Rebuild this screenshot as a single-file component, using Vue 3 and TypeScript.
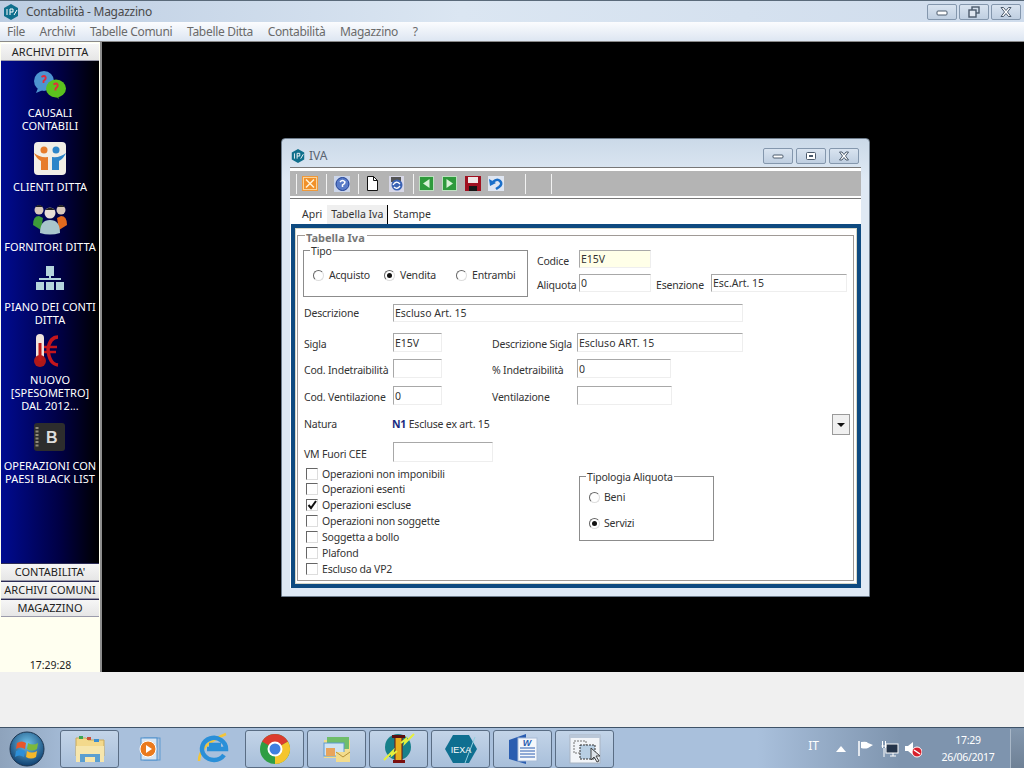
<template>
  <div class="screen">
    <header class="titlebar">
      <svg class="app-logo" width="18" height="18" viewBox="0 0 18 18">
        <path d="M9 1l7 4v8l-7 4-7-4V5z" fill="#0f6f8c" />
        <path d="M5 6v6M8 6v6M8 6h3v3H8M12 12l3-5" stroke="#fff" stroke-width="1" fill="none" />
      </svg>
      <span class="title-text">Contabilità - Magazzino</span>
      <div class="win-btns">
        <div class="win-btn">
          <svg width="14" height="10" viewBox="0 0 14 10"><rect x="2" y="4" width="10" height="4" rx="1" fill="#fff" stroke="#4b5a6c" /></svg>
        </div>
        <div class="win-btn">
          <svg width="14" height="12" viewBox="0 0 14 12"><rect x="5" y="1" width="7" height="6" fill="none" stroke="#4b5a6c" stroke-width="1.4" /><rect x="2" y="4" width="7" height="7" fill="#dfe7f1" stroke="#4b5a6c" stroke-width="1.4" /></svg>
        </div>
        <div class="win-btn">
          <svg width="16" height="12" viewBox="0 0 16 12"><path d="M3 1.500h2.500L8 4.500l2.500-3H13L9.500 6l3.500 4.500h-2.500L8 7.500l-2.500 3H3L6.500 6z" fill="#fff" stroke="#4b5a6c" /></svg>
        </div>
      </div>
    </header>

    <nav class="menubar">
      <span v-for="m in menus" :key="m">{{ m }}</span>
    </nav>

    <main class="workspace">
      <aside class="sidebar">
        <div class="side-btn first">ARCHIVI DITTA</div>
        <div class="side-items">
          <div v-for="item in sideItems" :key="item.id" class="side-item" :class="item.id">
            <svg class="side-icon" width="44" height="44" viewBox="0 0 44 44">
              <g v-if="item.id === 'causali'">
                <circle cx="16" cy="19" r="10" fill="#4d94d0" />
                <path d="M10 26l-2 5 7-3z" fill="#4d94d0" />
                <path d="M28 35l3 2-1-4z" fill="#4a9a18" />
                <ellipse cx="28" cy="26.500" rx="10" ry="9" fill="#5bc21e" />
                <path d="M13.500 15q3-2 4 0t-2 4v2M25.500 22.500q3-2 4 0t-2 4v2" stroke="#e22c3c" stroke-width="1.800" fill="none" />
              </g>
              <g v-else-if="item.id === 'clienti'">
                <rect x="6" y="6" width="32" height="33" rx="4" fill="#f2eee6" />
                <circle cx="16" cy="14" r="3.500" fill="#e77c2b" />
                <circle cx="28" cy="14" r="3.500" fill="#2e85c9" />
                <path d="M6 17q6 5 14 4v13h-7v-9q-5-3-7-8z" fill="#e77c2b" />
                <path d="M38 17q-6 5-14 4v13h7v-9q5-3 7-8z" fill="#2e85c9" />
              </g>
              <g v-else-if="item.id === 'fornitori'">
                <circle cx="11" cy="14" r="4.500" fill="#d8c8bc" />
                <path d="M7 11q4-4 8 0z" fill="#222" />
                <path d="M5 29q0-9 6-9l4 2-2 12z" fill="#3d9a3a" />
                <circle cx="33" cy="14" r="4.500" fill="#d8c8bc" />
                <path d="M29 11q4-4 8 0z" fill="#222" />
                <path d="M39 29q0-9-6-9l-4 2 2 12z" fill="#e2691e" />
                <circle cx="22" cy="17" r="5.500" fill="#e8ded8" />
                <path d="M17 14q5-5 10 0z" fill="#222" />
                <path d="M12 37q0-13 10-13t10 13q-10 3-20 0z" fill="#a9c6cc" />
              </g>
              <g v-else-if="item.id === 'piano'" fill="#b5d5dc">
                <rect x="18" y="10" width="8" height="10" />
                <rect x="21" y="20" width="2" height="3" />
                <rect x="11" y="22" width="22" height="2" />
                <rect x="8" y="26" width="8" height="8" />
                <rect x="18" y="26" width="8" height="8" />
                <rect x="28" y="26" width="8" height="8" />
              </g>
              <g v-else-if="item.id === 'nuovo'">
                <rect x="8" y="5" width="8" height="26" rx="4" fill="#f0e4dc" />
                <circle cx="12" cy="32" r="6" fill="#b01818" />
                <rect x="10.500" y="14" width="3" height="18" fill="#c01818" />
                <path d="M30 8q-8 0-10 12 1 15 10 16" stroke="#c4161c" stroke-width="3.500" fill="none" />
                <path d="M16 18h13M16 23h12" stroke="#c4161c" stroke-width="2.500" />
              </g>
              <g v-else>
                <rect x="6" y="8" width="31" height="28" rx="3" fill="#2d2d2d" />
                <path d="M9 12v20" stroke="#8f8a7a" stroke-width="3" stroke-dasharray="2 1.500" />
                <text x="18" y="28" class="b-letter">B</text>
              </g>
            </svg>
            <div v-for="line in item.lines" :key="line" class="side-label">{{ line }}</div>
          </div>
        </div>
        <div v-for="b in sideFooter" :key="b" class="side-btn">{{ b }}</div>
        <div class="clock-box">17:29:28</div>
      </aside>

      <section class="mdi">
        <div class="iva-window">
          <div class="iva-title">
            <svg width="16" height="16" viewBox="0 0 18 18">
              <path d="M9 1l7 4v8l-7 4-7-4V5z" fill="#0f6f8c" />
              <path d="M5 6v6M8 6v6M8 6h3v3H8M12 12l3-5" stroke="#fff" stroke-width="1" fill="none" />
            </svg>
            <span>IVA</span>
            <div class="win-btns small">
              <div class="win-btn">
                <svg width="14" height="8" viewBox="0 0 14 8"><rect x="2" y="3" width="10" height="3" rx="1" fill="#fff" stroke="#4b5a6c" /></svg>
              </div>
              <div class="win-btn">
                <svg width="12" height="10" viewBox="0 0 12 10"><rect x="1.500" y="1.500" width="9" height="7" rx="1" fill="#fff" stroke="#4b5a6c" /><rect x="4" y="4" width="4" height="2" fill="#4b5a6c" /></svg>
              </div>
              <div class="win-btn">
                <svg width="14" height="10" viewBox="0 0 14 10"><path d="M2.500 1h2.500L7 3.500 9 1h2.500L8.500 5l3 4H9L7 6.500 5 9H2.500l3-4z" fill="#fff" stroke="#4b5a6c" /></svg>
              </div>
            </div>
          </div>

          <div class="iva-client">
            <div class="toolbar">
              <i class="sep" />
              <svg class="tool near" width="16" height="15" viewBox="0 0 16 15"><rect width="16" height="15" fill="#ef9a3c" /><rect x="1.500" y="1.500" width="13" height="12" fill="#f0902a" stroke="#fbd49a" /><path d="M4 3.500l8 8M12 3.500l-8 8" stroke="#fff3d8" stroke-width="1.500" /></svg>
              <i class="sep" />
              <svg class="tool" width="16" height="16" viewBox="0 0 16 16"><rect width="16" height="16" fill="#ccd6ea" /><circle cx="8.500" cy="8" r="6.500" fill="#5a7cc8" stroke="#1e3f96" /><path d="M6 6q2.500-3 5 0 0 2-2.500 3v2" stroke="#fff" stroke-width="1.500" fill="none" /></svg>
              <i class="sep" />
              <svg class="tool" width="13" height="15" viewBox="0 0 13 15"><path d="M1.500 .5h6l4 4v10h-10z" fill="#fff" stroke="#111" /><path d="M7.500 .5v4h4" fill="none" stroke="#111" /></svg>
              <svg class="tool refresh" width="15" height="16" viewBox="0 0 15 16"><rect width="15" height="16" fill="#d8d8e8" /><rect x="2" y="1" width="10" height="5" fill="#555" /><circle cx="8" cy="9" r="5.500" fill="#3a62b4" /><path d="M4 9q3-5 7-1M11 10q-3 4-6 1" stroke="#fff" stroke-width="1.300" fill="none" /></svg>
              <i class="sep" />
              <svg class="tool near" width="15" height="15" viewBox="0 0 15 15"><rect width="15" height="15" fill="#2f9a3c" /><rect x=".5" y=".5" width="14" height="14" fill="none" stroke="#bde0c0" /><path d="M10.500 3v9L4 7.500z" fill="#d8f2d6" /></svg>
              <svg class="tool step" width="15" height="15" viewBox="0 0 15 15"><rect width="15" height="15" fill="#2f9a3c" /><rect x=".5" y=".5" width="14" height="14" fill="none" stroke="#bde0c0" /><path d="M4.500 3v9l6.500-4.500z" fill="#d8f2d6" /></svg>
              <svg class="tool step" width="16" height="15" viewBox="0 0 16 15"><rect width="16" height="15" fill="#a01020" /><rect x="3" y="1" width="10" height="6" fill="#f0e6e6" /><rect x="4" y="10" width="8" height="5" fill="#151515" /></svg>
              <svg class="tool" width="16" height="15" viewBox="0 0 16 15"><rect width="16" height="15" fill="#dfe6f2" /><path d="M5 6q4-4 7-1t-1 6l-3 2" stroke="#1a6fc9" stroke-width="2.500" fill="none" /><path d="M1 3l1 7 6-3z" fill="#1a6fc9" /></svg>
              <i class="sep wide" />
              <i class="sep" />
            </div>

            <div class="tabs">
              <span class="tab">Apri</span>
              <span class="tab active">Tabella Iva</span>
              <span class="tab">Stampe</span>
            </div>

            <div class="frame">
              <div class="group-box">
                <span class="group-legend">Tabella Iva</span>

                <div class="top-row">
                  <div class="fs tipo">
                    <span class="fs-legend">Tipo</span>
                    <label v-for="t in tipi" :key="t.label" class="radio-item" :style="{ width: t.width + 'px' }">
                      <i class="radio" :class="{ on: t.on }" />{{ t.label }}
                    </label>
                  </div>
                  <div class="top-fields">
                    <div class="field-row">
                      <span class="lbl lbl-codice">Codice</span>
                      <input class="inp w72 yellow" readonly value="E15V" />
                    </div>
                    <div class="field-row second">
                      <span class="lbl lbl-codice">Aliquota</span>
                      <input class="inp w72" readonly value="0" />
                      <span class="lbl lbl-esenz">Esenzione</span>
                      <input class="inp w136" readonly value="Esc.Art. 15" />
                    </div>
                  </div>
                </div>

                <div class="row row-desc">
                  <span class="lbl col1">Descrizione</span>
                  <input class="inp w350" readonly value="Escluso Art. 15" />
                </div>
                <div class="row row-sigla">
                  <span class="lbl col1">Sigla</span>
                  <input class="inp w49" readonly value="E15V" />
                  <span class="lbl col2">Descrizione Sigla</span>
                  <input class="inp w166" readonly value="Escluso ART. 15" />
                </div>
                <div class="row row-ind">
                  <span class="lbl col1">Cod. Indetraibilità</span>
                  <input class="inp w49" readonly value="" />
                  <span class="lbl col2">% Indetraibilità</span>
                  <input class="inp w94" readonly value="0" />
                </div>
                <div class="row row-vent">
                  <span class="lbl col1">Cod. Ventilazione</span>
                  <input class="inp w49" readonly value="0" />
                  <span class="lbl col2">Ventilazione</span>
                  <input class="inp w95" readonly value="" />
                </div>
                <div class="row row-natura">
                  <span class="lbl col1">Natura</span>
                  <span class="natura"><b>N1</b> Escluse ex art. 15</span>
                  <div class="drop-btn"><i /></div>
                </div>
                <div class="row row-vm">
                  <span class="lbl col1">VM Fuori CEE</span>
                  <input class="inp w100" readonly value="" />
                </div>

                <div class="bottom">
                  <div class="checks">
                    <label v-for="c in checks" :key="c.label" class="check-item">
                      <span class="check">
                        <svg v-if="c.on" width="10" height="10" viewBox="0 0 10 10"><path d="M1.500 5l2.500 3 5-7" stroke="#111" stroke-width="2" fill="none" /></svg>
                      </span>{{ c.label }}
                    </label>
                  </div>
                  <div class="fs tipologia">
                    <span class="fs-legend">Tipologia Aliquota</span>
                    <label class="radio-item stacked"><i class="radio" />Beni</label>
                    <label class="radio-item stacked"><i class="radio on" />Servizi</label>
                  </div>
                </div>
              </div>
            </div>
          </div>
        </div>
      </section>
    </main>

    <div class="gap-strip" />

    <footer class="taskbar">
      <svg class="orb" width="40" height="38" viewBox="0 0 40 38">
        <defs>
          <radialGradient id="orbg" cx="50%" cy="35%" r="65%">
            <stop offset="0" stop-color="#6fc2ea" />
            <stop offset="1" stop-color="#0f3f6f" />
          </radialGradient>
        </defs>
        <circle cx="20" cy="19" r="17" fill="url(#orbg)" stroke="#1d3550" />
        <path d="M10 13q5-3 9 0l-1 6q-5-3-9 0z" fill="#e8562a" />
        <path d="M21 13q5 3 10 0l-1 6q-5 3-10 0z" fill="#7db93c" />
        <path d="M9 21q5-3 9 0l-1 6q-5-3-9 0z" fill="#2d8fd8" />
        <path d="M20 21q5 3 10 0l-1 6q-5 3-10 0z" fill="#f5b82a" />
      </svg>

      <div class="task-btn">
        <svg width="32" height="30" viewBox="0 0 32 30">
          <path d="M2 4h10l2 2h16v16H2z" fill="#f3d98c" stroke="#c9a95a" />
          <rect x="5" y="2" width="4" height="3" fill="#3aa655" />
          <rect x="13" y="3" width="4" height="3" fill="#c9503c" />
          <rect x="20" y="5" width="5" height="3" fill="#3a8ed0" />
          <path d="M2 12h28v16H2z" fill="#f6e6ad" />
          <path d="M6 28v-8h20v8h-5v-5H11v5z" fill="#5b9fd0" />
        </svg>
      </div>
      <div class="task-plain media">
        <svg width="28" height="28" viewBox="0 0 28 28">
          <rect x="9" y="3" width="16" height="22" fill="none" stroke="#5f9ad0" />
          <rect x="6" y="3" width="16" height="22" fill="#d8e6f4" stroke="#4f90cc" />
          <circle cx="13" cy="14" r="8" fill="#ea7a1e" stroke="#fff" stroke-width="1" />
          <path d="M11 10l6 4-6 4z" fill="#fff" />
        </svg>
      </div>
      <div class="task-plain ie">
        <svg width="34" height="36" viewBox="0 0 34 36">
          <path d="M3 30Q3 14 30 3" stroke="#f3c53a" stroke-width="2.500" fill="none" />
          <path d="M28 24a12 11 0 1 1 2-6H11M13 14h12" stroke="#2a8fd8" stroke-width="4.500" fill="none" />
        </svg>
      </div>
      <div class="task-btn chrome">
        <svg width="32" height="32" viewBox="0 0 32 32">
          <circle cx="16" cy="16" r="15" fill="#2f9e44" />
          <path d="M16 16L3 8.500A15 15 0 0 1 29 8.500z" fill="#dc3b2e" />
          <path d="M16 16L29 8.500A15 15 0 0 1 16 31z" fill="#f5c52c" />
          <circle cx="16" cy="16" r="7.500" fill="#fff" />
          <circle cx="16" cy="16" r="5.500" fill="#3f7fe0" />
        </svg>
      </div>
      <div class="task-btn">
        <svg width="32" height="30" viewBox="0 0 32 30">
          <path d="M3 6h26v18H3z" fill="#f3dc8c" />
          <path d="M6 3h22v12H6z" fill="#6fbd6a" />
          <rect x="3" y="9" width="20" height="13" fill="#cfe3f3" stroke="#5f9ad0" />
          <rect x="5" y="14" width="9" height="8" fill="#e8a45c" />
          <path d="M15 18h14v10H15z" fill="#f3dc8c" />
          <path d="M15 18l7 5 7-5" stroke="#b5913a" fill="none" />
        </svg>
      </div>
      <div class="task-btn">
        <svg width="34" height="34" viewBox="0 0 34 34">
          <circle cx="16" cy="15" r="13" fill="#17808a" />
          <rect x="13" y="4" width="7" height="25" fill="#e8b020" stroke="#6a1010" />
          <rect x="10" y="3" width="13" height="3" fill="#5a1010" />
          <rect x="11" y="28" width="12" height="3" fill="#7a1010" />
          <path d="M2 28l9-9-1 4 5-4M32 2l-9 9 1-4-5 4" stroke="#e6f03c" stroke-width="2" fill="none" />
        </svg>
      </div>
      <div class="task-btn">
        <svg width="32" height="30" viewBox="0 0 32 30">
          <path d="M8 1h16l8 14-8 14H8L0 15z" fill="#0f6f90" />
          <path d="M20 29L30 3" stroke="#8fd0e0" stroke-width="1" />
          <text x="16" y="19" class="iexa">IEXA</text>
        </svg>
      </div>
      <div class="task-btn">
        <svg width="30" height="32" viewBox="0 0 30 32">
          <path d="M1 7L18 1v30L1 26z" fill="#2a5db0" />
          <rect x="10" y="5" width="19" height="23" fill="#f4f7fb" stroke="#a8bcd8" />
          <path d="M12 15h15M12 18h15M12 21h15M12 24h15" stroke="#2a5db0" />
          <text x="19" y="13" class="word-w">W</text>
        </svg>
      </div>
      <div class="task-btn">
        <svg width="34" height="32" viewBox="0 0 34 32">
          <rect x="2" y="2" width="30" height="28" fill="#f2f5f9" stroke="#a9b4c2" />
          <rect x="2" y="2" width="30" height="3" fill="#b9c7d8" />
          <rect x="6" y="8" width="12" height="12" fill="none" stroke="#777" stroke-dasharray="2 1" />
          <rect x="12" y="12" width="15" height="14" fill="#b8cfe4" stroke="#333" stroke-dasharray="2 1" />
          <path d="M23 15v12l3-3 3 5 2-1-3-5h4z" fill="#dde3ea" stroke="#444" />
        </svg>
      </div>

      <div class="tray">
        <span class="lang">IT</span>
        <svg class="tray-arrow" width="10" height="6" viewBox="0 0 10 6"><path d="M5 0l5 6H0z" fill="#fff" /></svg>
        <svg width="18" height="17" viewBox="0 0 18 17"><path d="M2 1v15" stroke="#fff" stroke-width="1.500" /><path d="M4 2q6-1 7 1l5 2-5 3q-3 1-7 0z" fill="#fff" /></svg>
        <svg width="18" height="18" viewBox="0 0 18 18"><rect x="5" y="4" width="12" height="9" fill="#24344a" stroke="#fff" /><path d="M9 16h6M12 13v3" stroke="#fff" /><path d="M1.500 1v7M4.500 1v7M0.500 6h5M3 8v9" stroke="#fff" /></svg>
        <svg class="tray-sound" width="18" height="18" viewBox="0 0 18 18"><path d="M1 6h3l5-4v13l-5-4H1z" fill="#fff" /><circle cx="13" cy="12" r="5" fill="#d8202c" stroke="#fff" /><path d="M10 10l6 4" stroke="#fff" stroke-width="1.500" /></svg>
        <div class="clock"><div>17:29</div><div>26/06/2017</div></div>
        <div class="show-desktop" />
      </div>
    </footer>
  </div>
</template>

<script setup lang="ts">
interface SideItem {
  id: string
  lines: string[]
}

const menus = ['File', 'Archivi', 'Tabelle Comuni', 'Tabelle Ditta', 'Contabilità', 'Magazzino', '?']

const sideItems: SideItem[] = [
  { id: 'causali', lines: ['CAUSALI', 'CONTABILI'] },
  { id: 'clienti', lines: ['CLIENTI DITTA'] },
  { id: 'fornitori', lines: ['FORNITORI DITTA'] },
  { id: 'piano', lines: ['PIANO DEI CONTI', 'DITTA'] },
  { id: 'nuovo', lines: ['NUOVO', '[SPESOMETRO]', 'DAL 2012...'] },
  { id: 'black', lines: ['OPERAZIONI CON', 'PAESI BLACK LIST'] }
]

const sideFooter = ["CONTABILITA'", 'ARCHIVI COMUNI', 'MAGAZZINO']

const tipi = [
  { label: 'Acquisto', on: false, width: 71 },
  { label: 'Vendita', on: true, width: 72 },
  { label: 'Entrambi', on: false, width: 65 }
]

const checks = [
  { label: 'Operazioni non imponibili', on: false },
  { label: 'Operazioni esenti', on: false },
  { label: 'Operazioni escluse', on: true },
  { label: 'Operazioni non soggette', on: false },
  { label: 'Soggetta a bollo', on: false },
  { label: 'Plafond', on: false },
  { label: 'Escluso da VP2', on: false }
]
</script>

<style>
html, body {
  margin: 0;
  background: #f0f0f0;
}
</style>

<style scoped>
.screen {
  width: 1024px;
  height: 768px;
  display: flex;
  flex-direction: column;
  overflow: hidden;
  font-family: "Noto Sans", "DejaVu Sans", sans-serif;
  font-size: 10.5px;
  color: #333;
}

.titlebar {
  height: 22px;
  flex: none;
  display: flex;
  align-items: center;
  padding-left: 2px;
  box-sizing: border-box;
  background: linear-gradient(90deg, #bccde2, #dbe6f2 45%, #cfdcec);
  border-top: 1px solid #5a6a7a;
}
.title-text {
  margin-left: 6px;
  font-size: 12px;
  letter-spacing: -.26px;
  color: #4a4a4a;
}
.win-btns {
  margin-left: auto;
  margin-right: 3px;
  display: flex;
  gap: 2px;
}
.win-btns.small {
  margin-right: 2px;
  gap: 3px;
}
.win-btn {
  width: 30px;
  height: 16px;
  box-sizing: border-box;
  display: flex;
  align-items: center;
  justify-content: center;
  border: 1px solid #8497ad;
  border-radius: 2px;
  background: linear-gradient(#d9e4f0, #bfcfe1);
}

.menubar {
  height: 20px;
  flex: none;
  display: flex;
  align-items: center;
  gap: 14.6px;
  padding-left: 7px;
  box-sizing: border-box;
  font-size: 12px;
  letter-spacing: -.3px;
  color: #6a6a6a;
  background: linear-gradient(#fbfcfe, #dde6f2);
  border-bottom: 1px solid #8a8a8a;
}

.workspace {
  height: 630px;
  flex: none;
  display: flex;
}

.sidebar {
  width: 102px;
  flex: none;
  box-sizing: border-box;
  display: flex;
  flex-direction: column;
  padding: 1px 0 0 1px;
  background: #fffff0;
  border-right: 2px solid #8c8c8c;
  font-size: 11px;
}
.side-btn {
  height: 18px;
  flex: none;
  box-sizing: border-box;
  text-align: center;
  line-height: 16px;
  color: #222;
  background: linear-gradient(#f6f6f6, #e6e6e6);
  border-bottom: 1px solid #9a9aaa;
  border-top: 1px solid #2b2b55;
  margin-right: 1px;
}
.side-btn.first {
  border-top: 1px solid #fff;
}
.side-items {
  height: 502px;
  flex: none;
  box-sizing: border-box;
  padding-top: 1px;
  display: flex;
  flex-direction: column;
  gap: 3px;
  margin-right: 1px;
  background: linear-gradient(90deg, #000b90, #000044 60%, #000);
}
.side-item {
  display: flex;
  flex-direction: column;
  align-items: center;
}
.side-item.causali {
  margin-bottom: 1px;
}
.side-icon {
  display: block;
}
.side-label {
  height: 13px;
  line-height: 13px;
  color: #fff;
  white-space: nowrap;
}
.b-letter {
  font-family: "Liberation Sans", sans-serif;
  font-size: 16px;
  font-weight: 700;
  fill: #ddd;
}
.clock-box {
  margin-top: auto;
  text-align: center;
  color: #222;
  font-size: 10.5px;
  line-height: 14px;
}

.mdi {
  flex: 1;
  position: relative;
  background: #000;
}
.iva-window {
  position: absolute;
  left: 179px;
  top: 96px;
  width: 589px;
  height: 459px;
  box-sizing: border-box;
  border: 1px solid #6f7d8c;
  border-radius: 4px 4px 0 0;
  background: linear-gradient(#cbd9e8, #dfe9f4 40px);
  padding: 0 8px 8px;
  display: flex;
  flex-direction: column;
}
.iva-title {
  height: 28px;
  flex: none;
  box-sizing: border-box;
  padding-top: 5px;
  display: flex;
  align-items: center;
  gap: 3px;
  font-size: 12px;
  color: #5a6470;
}
.iva-client {
  flex: 1;
  background: #fff;
  display: flex;
  flex-direction: column;
}

.toolbar {
  height: 32px;
  flex: none;
  box-sizing: border-box;
  display: flex;
  align-items: center;
  background: #b4b4b4;
  border: 1px solid #777;
  border-width: 1px 0;
  box-shadow: inset 0 3px 0 #fff, inset 0 -2px 0 #fff;
  padding: 1px 0 0 2px;
}
.sep {
  width: 1px;
  height: 20px;
  flex: none;
  background: #f2f2f2;
  margin: 0 4px;
}
.sep.wide {
  margin: 0 21px 0 17px;
}
.tool {
  flex: none;
  margin: 0 4px 0 3px;
}
.tool.near {
  margin-left: 1px;
}
.tool.refresh {
  margin-left: 6px;
  margin-right: 5px;
}
.tool.step {
  margin-left: 4px;
}

.tabs {
  height: 25px;
  flex: none;
  box-sizing: border-box;
  padding: 6px 0 0 8px;
  display: flex;
  color: #333;
}
.tab {
  height: 19px;
  line-height: 19px;
  padding: 0 4px;
  box-sizing: border-box;
  margin-right: 1px;
}
.tab.active {
  background: #efefef;
  border-right: 1px solid #000;
}

.frame {
  flex: 1;
  margin-left: 1px;
  box-sizing: border-box;
  border: 4px solid #0e4a80;
  box-shadow: inset 0 0 0 1px #d8d8c8;
  padding: 7px 3px 3px 2px;
  display: flex;
  letter-spacing: -.2px;
}
.group-box {
  flex: 1;
  position: relative;
  box-sizing: border-box;
  border: 1px solid #a09a96;
  padding: 14px 0 0 5px;
}
.group-legend {
  position: absolute;
  left: 7px;
  top: -5px;
  background: #fff;
  padding: 0 2px 0 1px;
  font-weight: 700;
  font-size: 11px;
  letter-spacing: 0;
  line-height: 13px;
  color: #777;
}

.top-row {
  display: flex;
}
.fs {
  position: relative;
  box-sizing: border-box;
  border: 1px solid #8c8c8c;
}
.fs-legend {
  position: absolute;
  left: 6px;
  top: -6px;
  padding: 0 1px;
  line-height: 12px;
  background: #fff;
}
.tipologia .fs-legend {
  left: 6px;
}
.tipo {
  width: 225px;
  height: 47px;
  padding: 18px 0 0 9px;
  display: flex;
  align-items: flex-start;
}
.radio-item {
  display: flex;
  align-items: center;
  flex: none;
  height: 13px;
  line-height: 13px;
}
.radio {
  width: 11px;
  height: 11px;
  flex: none;
  margin-right: 5px;
  box-sizing: border-box;
  border-radius: 50%;
  border: 1px solid;
  border-color: #666 #ddd #ddd #666;
  position: relative;
}
.radio.on::after {
  content: "";
  position: absolute;
  left: 2px;
  top: 2px;
  width: 5px;
  height: 5px;
  border-radius: 50%;
  background: #111;
}

.top-fields {
  margin-left: 9px;
}
.field-row {
  display: flex;
  height: 18px;
}
.field-row.second {
  margin-top: 6px;
}
.lbl {
  flex: none;
  white-space: nowrap;
  line-height: 18px;
}
.lbl-codice {
  width: 42px;
  padding-top: 2px;
}
.lbl-esenz {
  width: 55px;
  margin-left: 5px;
  padding-top: 2px;
}
.inp {
  flex: none;
  height: 100%;
  box-sizing: border-box;
  border: 1px solid;
  border-color: #a8a8a8 #eee #eee #a8a8a8;
  padding: 0 1px;
  margin: 0;
  outline: none;
  background: #fff;
  font: inherit;
  color: #333;
}
.yellow {
  background: #ffffe8;
}
.w49 { width: 49px; }
.w72 { width: 72px; }
.w94 { width: 94px; }
.w95 { width: 95px; }
.w100 { width: 100px; }
.w136 { width: 136px; }
.w166 { width: 166px; }
.w350 { width: 350px; }

.row {
  display: flex;
}
.col1 {
  width: 89px;
  margin-left: 1px;
}
.col2 {
  width: 85px;
  margin-left: 50px;
}
.row-desc { margin-top: 7px; height: 18px; }
.row-sigla { margin-top: 11px; height: 19px; }
.row-ind { margin-top: 7px; height: 19px; }
.row-vent { margin-top: 8px; height: 19px; }
.row-natura { margin-top: 9px; height: 21px; align-items: center; }
.row-vm { margin-top: 7px; height: 20px; }
.row-sigla .lbl, .row-ind .lbl, .row-vent .lbl {
  padding-top: 2px;
}
.row-vm .lbl {
  padding-top: 3px;
}
.row-natura .lbl, .natura {
  margin-top: -2px;
}
.natura {
  width: 439px;
  flex: none;
  margin-left: -1px;
  margin-right: 1px;
}
.natura b {
  color: #1a2a80;
}
.drop-btn {
  width: 18px;
  height: 21px;
  box-sizing: border-box;
  border: 1px solid #9a9a9a;
  background: #f0f0f0;
  display: flex;
  align-items: center;
  justify-content: center;
}
.drop-btn i {
  width: 0;
  height: 0;
  border: 4px solid transparent;
  border-top: 4px solid #111;
  border-bottom: 0;
}

.bottom {
  margin-top: 4px;
  display: flex;
}
.checks {
  width: 276px;
  flex: none;
  padding-left: 3px;
  box-sizing: border-box;
}
.check-item {
  height: 16px;
  display: flex;
  align-items: center;
}
.check-item:first-child {
  height: 15px;
}
.check {
  width: 12px;
  height: 12px;
  flex: none;
  margin-right: 4px;
  box-sizing: border-box;
  border: 1px solid;
  border-color: #666 #ddd #ddd #666;
  display: flex;
  align-items: center;
  justify-content: center;
}
.tipologia {
  width: 135px;
  height: 65px;
  margin-top: 10px;
  padding: 14px 0 0 9px;
}
.radio-item.stacked {
  margin-bottom: 13px;
}
.radio-item.stacked .radio {
  margin-right: 4px;
}

.gap-strip {
  height: 55px;
  flex: none;
  background: #f0f0f0;
}

.taskbar {
  flex: 1;
  display: flex;
  align-items: center;
  box-sizing: border-box;
  border-top: 1px solid #3f5368;
  background: linear-gradient(90deg, #8ea3bc 0, #a9c0dc 8%, #a9c0dc 74%, #7e94ae 88%, #7e94ae);
  padding: 1px 0 0;
}
.orb {
  flex: none;
  margin: 0 13px 0 7px;
}
.task-btn {
  width: 59px;
  height: 38px;
  flex: none;
  margin-right: 3px;
  box-sizing: border-box;
  display: flex;
  align-items: center;
  justify-content: center;
  border: 1px solid #5a6d84;
  border-radius: 3px;
  background: linear-gradient(#c3d4e8, #a8bfda);
}
.task-plain {
  flex: none;
  display: flex;
  align-items: center;
  justify-content: center;
  height: 38px;
}
.media {
  width: 53px;
}
.ie {
  width: 70px;
  box-sizing: border-box;
  padding-left: 21px;
  justify-content: flex-start;
}
.iexa {
  font-family: "Liberation Sans", sans-serif;
  font-size: 9px;
  fill: #fff;
  text-anchor: middle;
}
.word-w {
  font-family: "Liberation Sans", sans-serif;
  font-size: 9px;
  font-weight: 700;
  font-style: italic;
  fill: #2a5db0;
  text-anchor: middle;
}
.tray {
  margin-left: auto;
  height: 100%;
  display: flex;
  align-items: center;
  gap: 6px;
  color: #fff;
  font-size: 12px;
}
.lang {
  margin-right: 11px;
  margin-bottom: 6px;
}
.tray-arrow {
  margin-right: 5px;
}
.tray-sound {
  margin-left: -1px;
}
.clock {
  margin-left: 3px;
  width: 74px;
  text-align: center;
  line-height: 17px;
  font-size: 10.5px;
  letter-spacing: -.3px;
}
.show-desktop {
  width: 14px;
  height: 100%;
  margin-left: -1px;
  box-sizing: border-box;
  background: linear-gradient(#8397ad, #6f8196);
  border-left: 1px solid #a9b8c8;
}
</style>
